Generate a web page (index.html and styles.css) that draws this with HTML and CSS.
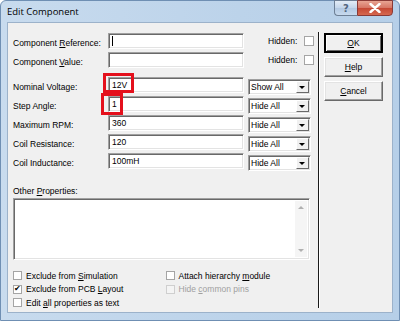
FILE: index.html
```html
<!DOCTYPE html>
<html lang="en">
<head>
    <meta charset="UTF-8">
    <title>Edit Component</title>
    <link rel="stylesheet" href="styles.css">
</head>
<body>
    <div class="window">
        <div class="titlebar">
            <span class="title">Edit Component</span>
            <div class="caption-btns">
                <span class="cap-btn cap-help">?</span>
                <span class="cap-btn cap-close">
                    <svg width="12" height="10" viewBox="0 0 12 10"><path d="M1.5 1 L10.5 9 M10.5 1 L1.5 9" stroke="#fff" stroke-width="2.4" stroke-linecap="round"/></svg>
                </span>
            </div>
        </div>

        <div class="client">
            <div class="main">
                <div class="row">
                    <span class="lbl">Component <u>R</u>eference:</span>
                    <div class="edit"><span class="caret"></span></div>
                    <span class="hidden-lbl">Hidden:</span>
                    <span class="chk"></span>
                </div>
                <div class="row">
                    <span class="lbl">Component <u>V</u>alue:</span>
                    <div class="edit"></div>
                    <span class="hidden-lbl">Hidden:</span>
                    <span class="chk"></span>
                </div>

                <div class="props">
                    <div class="row">
                        <span class="lbl">Nominal Voltage:</span>
                        <div class="edit">12V</div>
                        <div class="combo"><span class="combo-text">Show All</span><span class="drop"></span></div>
                    </div>
                    <div class="row">
                        <span class="lbl">Step Angle:</span>
                        <div class="edit">1</div>
                        <div class="combo"><span class="combo-text">Hide All</span><span class="drop"></span></div>
                    </div>
                    <div class="row">
                        <span class="lbl">Maximum RPM:</span>
                        <div class="edit">360</div>
                        <div class="combo"><span class="combo-text">Hide All</span><span class="drop"></span></div>
                    </div>
                    <div class="row">
                        <span class="lbl">Coil Resistance:</span>
                        <div class="edit">120</div>
                        <div class="combo"><span class="combo-text">Hide All</span><span class="drop"></span></div>
                    </div>
                    <div class="row">
                        <span class="lbl">Coil Inductance:</span>
                        <div class="edit">100mH</div>
                        <div class="combo"><span class="combo-text">Hide All</span><span class="drop"></span></div>
                    </div>
                    <!-- red annotation boxes drawn over the fields -->
                    <div class="mark mark-volt"></div>
                    <div class="mark mark-step"></div>
                </div>

                <div class="other-lbl">Other <u>P</u>roperties:</div>
                <div class="memo">
                    <div class="vscroll">
                        <span class="arrow-up"></span>
                        <span class="arrow-down"></span>
                    </div>
                </div>

                <div class="options">
                    <div class="opt-col">
                        <label class="opt"><span class="chk"></span><span>Exclude from <u>S</u>imulation</span></label>
                        <label class="opt"><span class="chk">&#10004;</span><span>Exclude from PCB <u>L</u>ayout</span></label>
                        <label class="opt"><span class="chk"></span><span>Edit <u>a</u>ll properties as text</span></label>
                    </div>
                    <div class="opt-col">
                        <label class="opt"><span class="chk"></span><span>Attach hierarchy <u>m</u>odule</span></label>
                        <label class="opt disabled"><span class="chk"></span><span>Hide <u>c</u>ommon pins</span></label>
                    </div>
                </div>
            </div>

            <div class="sep"></div>

            <div class="buttons">
                <button class="btn default-btn"><u>O</u>K</button>
                <button class="btn"><u>H</u>elp</button>
                <button class="btn"><u>C</u>ancel</button>
            </div>
        </div>
    </div>
</body>
</html>
```

FILE: styles.css
```css
body {
    margin: 0;
    padding: 0;
    background-color: #fff;
}
.window {
    width: 400px;
    height: 321px;
    box-sizing: border-box;
    border: 1px solid #6f8fb3;
    border-radius: 6px 6px 0 0;
    background: linear-gradient(to right, #c8dbee 0%, #bcd3ea 60%, #b6cfe8 100%);
    display: flex;
    flex-direction: column;
}
.titlebar {
    height: 21px;
    display: flex;
    justify-content: space-between;
    align-items: flex-start;
}
.title {
    font-family: "Open Sans", sans-serif;
    font-size: 9.5px;
    color: #000;
    margin: 4px 0 0 6px;
}
.caption-btns {
    display: flex;
    margin-right: 6px;
    margin-top: -1px;
}
.cap-btn {
    height: 16px;
    display: flex;
    align-items: center;
    justify-content: center;
    border: 1px solid #6d7f95;
    box-sizing: border-box;
}
.cap-help {
    width: 23px;
    border-radius: 0 0 0 4px;
    border-right: none;
    background: linear-gradient(#e3ecf6, #c3d5ea 50%, #b2c8e2 51%, #c7daee);
    font-family: "DejaVu Sans", sans-serif;
    font-size: 10px;
    font-weight: bold;
    color: #52657e;
}
.cap-close {
    width: 36px;
    border-radius: 0 0 4px 0;
    border-color: #8a3a36;
    background: linear-gradient(#e8a493, #d67463 50%, #c54733 51%, #d6684f);
}

.client {
    flex: 1;
    margin: 0 6px 7px 6px;
    background-color: #f0f0f0;
    border: 1px solid #9cb2ca;
    display: flex;
    font-family: "Liberation Sans", Arial, sans-serif;
    font-size: 8.5px;
    color: #000;
}
.main {
    width: 305px;
    padding: 10px 0 0 5px;
}
.row {
    display: flex;
    align-items: center;
    height: 16px;
    margin-bottom: 3px;
}
.lbl {
    width: 95px;
    flex-shrink: 0;
    padding-top: 4px;
}
.edit {
    width: 136px;
    height: 16px;
    box-sizing: border-box;
    background-color: #fff;
    border: 1px solid;
    border-color: #a0a0a0 #fff #fff #a0a0a0;
    box-shadow: inset 1px 1px 0 #696969, inset -1px -1px 0 #e3e3e3;
    padding: 2px 0 0 3px;
    line-height: 11px;
}
.caret {
    display: inline-block;
    width: 1px;
    height: 10px;
    background-color: #000;
}
.hidden-lbl {
    margin-left: 24px;
    width: 36px;
}
.chk {
    width: 10px;
    height: 10px;
    box-sizing: border-box;
    border: 1px solid #a5a5a5;
    background-color: #fff;
    display: inline-flex;
    align-items: center;
    justify-content: center;
    font-size: 8px;
    line-height: 8px;
    flex-shrink: 0;
}

.props {
    position: relative;
    margin-top: 9px;
}
.combo {
    width: 63px;
    height: 16px;
    margin-left: 4px;
    margin-top: 3px;
    box-sizing: border-box;
    background-color: #fff;
    border: 1px solid;
    border-color: #a0a0a0 #fff #fff #a0a0a0;
    box-shadow: inset 1px 1px 0 #696969, inset -1px -1px 0 #e3e3e3;
    display: flex;
    align-items: center;
    justify-content: space-between;
    padding: 1px 1px 1px 2px;
}
.combo-text {
    padding-top: 1px;
}
.drop {
    width: 13px;
    height: 12px;
    box-sizing: border-box;
    background-color: #f0f0f0;
    border: 1px solid;
    border-color: #fff #696969 #696969 #fff;
    position: relative;
}
.drop::after {
    content: "";
    position: absolute;
    left: 2px;
    top: 4px;
    border-left: 3.5px solid transparent;
    border-right: 3.5px solid transparent;
    border-top: 3.5px solid #000;
}
.mark {
    position: absolute;
    border: 3px solid #e4101c;
}
.mark-volt {
    left: 90px;
    top: -4px;
    width: 25px;
    height: 14px;
}
.mark-step {
    left: 88px;
    top: 16px;
    width: 16px;
    height: 16px;
}

.other-lbl {
    margin-top: 17px;
    height: 11px;
}
.memo {
    width: 297px;
    height: 62px;
    margin-top: 1px;
    box-sizing: border-box;
    background-color: #fff;
    border: 1px solid;
    border-color: #a0a0a0 #fff #fff #a0a0a0;
    box-shadow: inset 1px 1px 0 #696969, inset -1px -1px 0 #e3e3e3;
    display: flex;
    justify-content: flex-end;
    padding: 2px 2px 2px 0;
}
.vscroll {
    width: 12px;
    background-color: #f5f5f5;
    display: flex;
    flex-direction: column;
    justify-content: space-between;
    align-items: center;
    padding: 5px 0;
}
.arrow-up {
    border-left: 3px solid transparent;
    border-right: 3px solid transparent;
    border-bottom: 3px solid #b0b0b0;
}
.arrow-down {
    border-left: 3px solid transparent;
    border-right: 3px solid transparent;
    border-top: 3px solid #b0b0b0;
}

.options {
    display: flex;
    margin-top: 9px;
}
.opt-col {
    width: 160px;
}
.opt {
    display: flex;
    align-items: center;
    gap: 4px;
    height: 13.5px;
}
.opt .chk {
    width: 9px;
    height: 9px;
}
.opt.disabled {
    color: #a0a0a0;
}
.opt.disabled .chk {
    background-color: #f4f4f4;
    border-color: #cfcfcf;
}

.sep {
    width: 1px;
    margin: 9px 0 4px 0;
    background-color: #1a1a1a;
    border-right: 1px solid #fff;
}
.buttons {
    display: flex;
    flex-direction: column;
    gap: 4px;
    padding: 10px 0 0 4px;
}
.btn {
    width: 59px;
    height: 20px;
    font-family: "Liberation Sans", Arial, sans-serif;
    font-size: 8.5px;
    background-color: #f0f0f0;
    border: 1px solid;
    border-color: #fff #696969 #696969 #fff;
    box-shadow: inset -1px -1px 0 #a0a0a0, inset 1px 1px 0 #e3e3e3;
    padding: 0;
    color: #000;
}
.default-btn {
    border: 2px solid #000;
    box-shadow: inset 1px 1px 0 #fff, inset -1px -1px 0 #696969;
}
```
